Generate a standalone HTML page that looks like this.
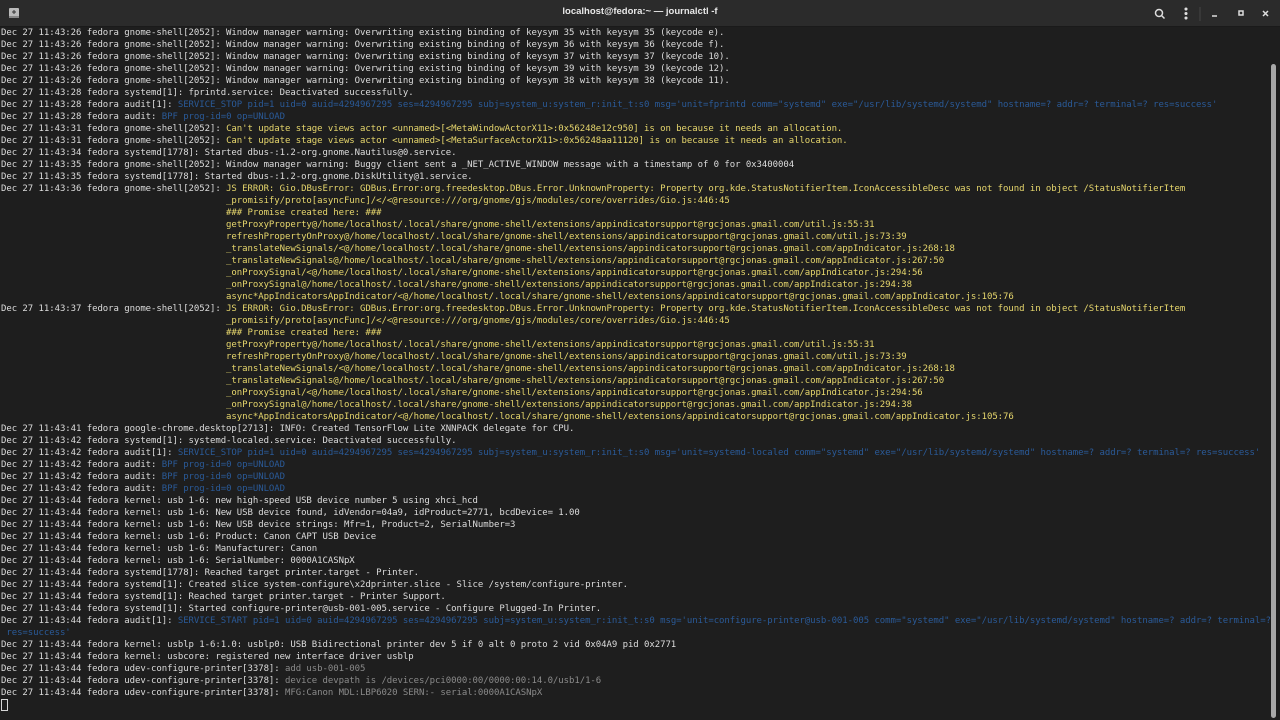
<!DOCTYPE html>
<html><head><meta charset="utf-8"><style>
body{margin:0;width:1280px;height:720px;background:#1e1e1e;overflow:hidden;font-family:"Liberation Mono",monospace;}
#hdr{position:absolute;left:0;top:0;width:1280px;height:26px;background:#2b2b2b;border-bottom:1px solid #1a1a1a;}
#title{position:absolute;left:0;width:1280px;top:6px;text-align:center;color:#e8e8e8;font:bold 9.5px "Liberation Sans",sans-serif;}
pre{position:absolute;left:1px;top:27px;margin:0;font-size:9px;line-height:12px;color:#dcdcdc;letter-spacing:-0.06px;}
.y{color:#e6d66c}.b{color:#2a5a98}.g{color:#8a8a8a}
#sb{position:absolute;left:1271px;top:64px;width:5px;height:654px;background:#a8a8a8;border-radius:3px;}
#cur{position:absolute;left:1px;top:699px;width:5px;height:10px;border:1px solid #d6d6d6;}
</style></head><body>
<div id="hdr">
<svg style="position:absolute;left:8px;top:7px" width="12" height="12"><rect x="1" y="1" width="10" height="9" fill="#bbb" rx="1"/><rect x="1" y="9" width="10" height="2" fill="#888"/><path d="M4 5h4M6 3v4" stroke="#333" stroke-width="1"/></svg>
<div id="title">localhost@fedora:~ — journalctl -f</div>
<svg style="position:absolute;left:1150px;top:6px" width="120" height="16" fill="none" stroke="#ddd" stroke-width="1.5">
<circle cx="9" cy="7" r="3.5"/><path d="M11.5 9.5l3 3"/>
<circle cx="36" cy="3" r="0.8" fill="#ddd"/><circle cx="36" cy="7.5" r="0.8" fill="#ddd"/><circle cx="36" cy="12" r="0.8" fill="#ddd"/>
<path d="M50 1v14" stroke="#444" stroke-width="1"/>
<path d="M62 10h5"/><rect x="89" y="5" width="4" height="4"/><path d="M113 5l5 5M118 5l-5 5"/>
</svg>
</div>
<pre>Dec 27 11:43:26 fedora gnome-shell[2052]: Window manager warning: Overwriting existing binding of keysym 35 with keysym 35 (keycode e).
Dec 27 11:43:26 fedora gnome-shell[2052]: Window manager warning: Overwriting existing binding of keysym 36 with keysym 36 (keycode f).
Dec 27 11:43:26 fedora gnome-shell[2052]: Window manager warning: Overwriting existing binding of keysym 37 with keysym 37 (keycode 10).
Dec 27 11:43:26 fedora gnome-shell[2052]: Window manager warning: Overwriting existing binding of keysym 39 with keysym 39 (keycode 12).
Dec 27 11:43:26 fedora gnome-shell[2052]: Window manager warning: Overwriting existing binding of keysym 38 with keysym 38 (keycode 11).
Dec 27 11:43:28 fedora systemd[1]: fprintd.service: Deactivated successfully.
Dec 27 11:43:28 fedora audit[1]: <span class="b">SERVICE_STOP pid=1 uid=0 auid=4294967295 ses=4294967295 subj=system_u:system_r:init_t:s0 msg='unit=fprintd comm="systemd" exe="/usr/lib/systemd/systemd" hostname=? addr=? terminal=? res=success'</span>
Dec 27 11:43:28 fedora audit: <span class="b">BPF prog-id=0 op=UNLOAD</span>
Dec 27 11:43:31 fedora gnome-shell[2052]: <span class="y">Can't update stage views actor &lt;unnamed&gt;[&lt;MetaWindowActorX11&gt;:0x56248e12c950] is on because it needs an allocation.</span>
Dec 27 11:43:31 fedora gnome-shell[2052]: <span class="y">Can't update stage views actor &lt;unnamed&gt;[&lt;MetaSurfaceActorX11&gt;:0x56248aa11120] is on because it needs an allocation.</span>
Dec 27 11:43:34 fedora systemd[1778]: Started dbus-:1.2-org.gnome.Nautilus@0.service.
Dec 27 11:43:35 fedora gnome-shell[2052]: Window manager warning: Buggy client sent a _NET_ACTIVE_WINDOW message with a timestamp of 0 for 0x3400004
Dec 27 11:43:35 fedora systemd[1778]: Started dbus-:1.2-org.gnome.DiskUtility@1.service.
Dec 27 11:43:36 fedora gnome-shell[2052]: <span class="y">JS ERROR: Gio.DBusError: GDBus.Error:org.freedesktop.DBus.Error.UnknownProperty: Property org.kde.StatusNotifierItem.IconAccessibleDesc was not found in object /StatusNotifierItem
                                          _promisify/proto[asyncFunc]/&lt;/&lt;@resource:///org/gnome/gjs/modules/core/overrides/Gio.js:446:45
                                          ### Promise created here: ###
                                          getProxyProperty@/home/localhost/.local/share/gnome-shell/extensions/appindicatorsupport@rgcjonas.gmail.com/util.js:55:31
                                          refreshPropertyOnProxy@/home/localhost/.local/share/gnome-shell/extensions/appindicatorsupport@rgcjonas.gmail.com/util.js:73:39
                                          _translateNewSignals/&lt;@/home/localhost/.local/share/gnome-shell/extensions/appindicatorsupport@rgcjonas.gmail.com/appIndicator.js:268:18
                                          _translateNewSignals@/home/localhost/.local/share/gnome-shell/extensions/appindicatorsupport@rgcjonas.gmail.com/appIndicator.js:267:50
                                          _onProxySignal/&lt;@/home/localhost/.local/share/gnome-shell/extensions/appindicatorsupport@rgcjonas.gmail.com/appIndicator.js:294:56
                                          _onProxySignal@/home/localhost/.local/share/gnome-shell/extensions/appindicatorsupport@rgcjonas.gmail.com/appIndicator.js:294:38
                                          async*AppIndicatorsAppIndicator/&lt;@/home/localhost/.local/share/gnome-shell/extensions/appindicatorsupport@rgcjonas.gmail.com/appIndicator.js:105:76</span>
Dec 27 11:43:37 fedora gnome-shell[2052]: <span class="y">JS ERROR: Gio.DBusError: GDBus.Error:org.freedesktop.DBus.Error.UnknownProperty: Property org.kde.StatusNotifierItem.IconAccessibleDesc was not found in object /StatusNotifierItem
                                          _promisify/proto[asyncFunc]/&lt;/&lt;@resource:///org/gnome/gjs/modules/core/overrides/Gio.js:446:45
                                          ### Promise created here: ###
                                          getProxyProperty@/home/localhost/.local/share/gnome-shell/extensions/appindicatorsupport@rgcjonas.gmail.com/util.js:55:31
                                          refreshPropertyOnProxy@/home/localhost/.local/share/gnome-shell/extensions/appindicatorsupport@rgcjonas.gmail.com/util.js:73:39
                                          _translateNewSignals/&lt;@/home/localhost/.local/share/gnome-shell/extensions/appindicatorsupport@rgcjonas.gmail.com/appIndicator.js:268:18
                                          _translateNewSignals@/home/localhost/.local/share/gnome-shell/extensions/appindicatorsupport@rgcjonas.gmail.com/appIndicator.js:267:50
                                          _onProxySignal/&lt;@/home/localhost/.local/share/gnome-shell/extensions/appindicatorsupport@rgcjonas.gmail.com/appIndicator.js:294:56
                                          _onProxySignal@/home/localhost/.local/share/gnome-shell/extensions/appindicatorsupport@rgcjonas.gmail.com/appIndicator.js:294:38
                                          async*AppIndicatorsAppIndicator/&lt;@/home/localhost/.local/share/gnome-shell/extensions/appindicatorsupport@rgcjonas.gmail.com/appIndicator.js:105:76</span>
Dec 27 11:43:41 fedora google-chrome.desktop[2713]: INFO: Created TensorFlow Lite XNNPACK delegate for CPU.
Dec 27 11:43:42 fedora systemd[1]: systemd-localed.service: Deactivated successfully.
Dec 27 11:43:42 fedora audit[1]: <span class="b">SERVICE_STOP pid=1 uid=0 auid=4294967295 ses=4294967295 subj=system_u:system_r:init_t:s0 msg='unit=systemd-localed comm="systemd" exe="/usr/lib/systemd/systemd" hostname=? addr=? terminal=? res=success'</span>
Dec 27 11:43:42 fedora audit: <span class="b">BPF prog-id=0 op=UNLOAD</span>
Dec 27 11:43:42 fedora audit: <span class="b">BPF prog-id=0 op=UNLOAD</span>
Dec 27 11:43:42 fedora audit: <span class="b">BPF prog-id=0 op=UNLOAD</span>
Dec 27 11:43:44 fedora kernel: usb 1-6: new high-speed USB device number 5 using xhci_hcd
Dec 27 11:43:44 fedora kernel: usb 1-6: New USB device found, idVendor=04a9, idProduct=2771, bcdDevice= 1.00
Dec 27 11:43:44 fedora kernel: usb 1-6: New USB device strings: Mfr=1, Product=2, SerialNumber=3
Dec 27 11:43:44 fedora kernel: usb 1-6: Product: Canon CAPT USB Device
Dec 27 11:43:44 fedora kernel: usb 1-6: Manufacturer: Canon
Dec 27 11:43:44 fedora kernel: usb 1-6: SerialNumber: 0000A1CASNpX
Dec 27 11:43:44 fedora systemd[1778]: Reached target printer.target - Printer.
Dec 27 11:43:44 fedora systemd[1]: Created slice system-configure\x2dprinter.slice - Slice /system/configure-printer.
Dec 27 11:43:44 fedora systemd[1]: Reached target printer.target - Printer Support.
Dec 27 11:43:44 fedora systemd[1]: Started configure-printer@usb-001-005.service - Configure Plugged-In Printer.
Dec 27 11:43:44 fedora audit[1]: <span class="b">SERVICE_START pid=1 uid=0 auid=4294967295 ses=4294967295 subj=system_u:system_r:init_t:s0 msg='unit=configure-printer@usb-001-005 comm="systemd" exe="/usr/lib/systemd/systemd" hostname=? addr=? terminal=?
 res=success'</span>
Dec 27 11:43:44 fedora kernel: usblp 1-6:1.0: usblp0: USB Bidirectional printer dev 5 if 0 alt 0 proto 2 vid 0x04A9 pid 0x2771
Dec 27 11:43:44 fedora kernel: usbcore: registered new interface driver usblp
Dec 27 11:43:44 fedora udev-configure-printer[3378]: <span class="g">add usb-001-005</span>
Dec 27 11:43:44 fedora udev-configure-printer[3378]: <span class="g">device devpath is /devices/pci0000:00/0000:00:14.0/usb1/1-6</span>
Dec 27 11:43:44 fedora udev-configure-printer[3378]: <span class="g">MFG:Canon MDL:LBP6020 SERN:- serial:0000A1CASNpX</span></pre>
<div id="cur"></div>
<div id="sb"></div>
</body></html>
